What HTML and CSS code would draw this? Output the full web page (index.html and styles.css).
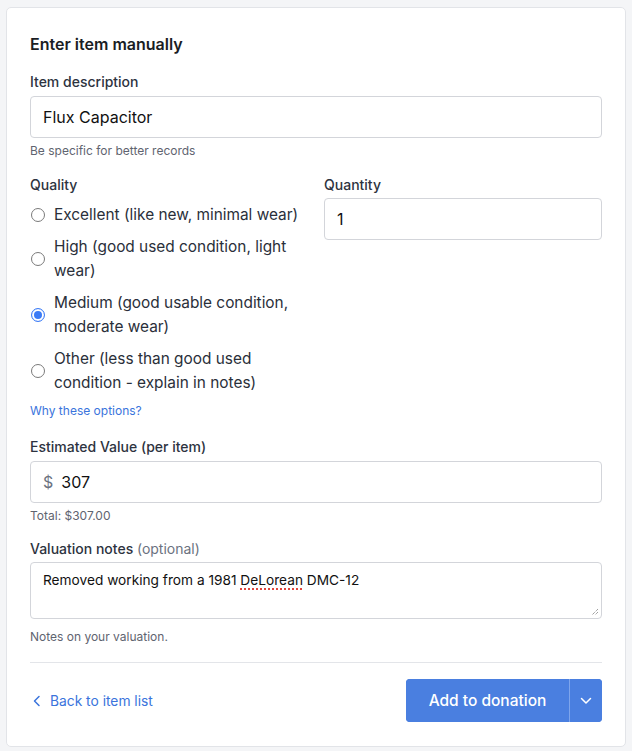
FILE: index.html
```html
<!DOCTYPE html>
<html lang="en">
<head>
<meta charset="utf-8">
<title>Enter item manually</title>
<link rel="stylesheet" href="styles.css">
</head>
<body>
<div class="card">
  <h2 class="title">Enter item manually</h2>

  <div class="field">
    <label class="label" for="desc">Item description</label>
    <input id="desc" class="input" type="text" value="Flux Capacitor">
    <div class="hint">Be specific for better records</div>
  </div>

  <div class="cols">
    <div class="col-left">
      <div class="label">Quality</div>
      <div class="radios">
        <label class="radio"><span class="dot"></span><span class="rtext">Excellent (like new, minimal wear)</span></label>
        <label class="radio"><span class="dot"></span><span class="rtext">High (good used condition, light wear)</span></label>
        <label class="radio"><span class="dot checked"></span><span class="rtext">Medium (good usable condition, moderate wear)</span></label>
        <label class="radio"><span class="dot"></span><span class="rtext">Other (less than good used condition - explain in notes)</span></label>
      </div>
      <a class="small-link" href="#">Why these options?</a>
    </div>
    <div class="col-right">
      <label class="label qty-label" for="qty">Quantity</label>
      <input id="qty" class="input" type="text" value="1">
    </div>
  </div>

  <div class="field">
    <label class="label" for="val">Estimated Value (per item)</label>
    <div class="input money"><span class="cur">$</span><span class="num">307</span></div>
    <div class="hint">Total: $307.00</div>
  </div>

  <div class="field notes-field">
    <label class="label notes-label" for="notes">Valuation notes <span class="opt">(optional)</span></label>
    <div class="textarea"><span>Removed working from a 1981 <span class="spell">DeLorean</span> DMC-12</span>
      <svg class="grip" width="8" height="8" viewBox="0 0 8 8"><path d="M7 1 L1 7 M7 4 L4 7" stroke="#777" stroke-width="1" stroke-dasharray="1 1"/></svg>
    </div>
    <div class="hint notes-hint">Notes on your valuation.</div>
  </div>

  <div class="footer">
    <a class="back" href="#">
      <svg width="10" height="12" viewBox="0 0 10 12"><path d="M7 1.5 L2.5 6 L7 10.5" fill="none" stroke="currentColor" stroke-width="1.5" stroke-linecap="round" stroke-linejoin="round"/></svg>
      <span>Back to item list</span>
    </a>
    <div class="btn-group">
      <button class="btn-main">Add to donation</button>
      <button class="btn-caret" aria-label="More options">
        <svg width="12" height="8" viewBox="0 0 12 8"><path d="M1.5 1.5 L6 6 L10.5 1.5" fill="none" stroke="#fff" stroke-width="1.5" stroke-linecap="round" stroke-linejoin="round"/></svg>
      </button>
    </div>
  </div>
</div>
</body>
</html>
```

FILE: styles.css
```css
* { box-sizing: border-box; }
html, body { margin: 0; }
body {
  background: #f4f5f7;
  font-family: Inter, "Noto Sans", "Liberation Sans", sans-serif;
  color: #1f2937;
  padding: 7px 6px 4px 6px;
}
.card {
  width: 620px;
  height: 740px;
  background: #fff;
  border: 1px solid #e2e4e8;
  border-radius: 5px;
  padding: 23px 23px 0 23px;
}
.title {
  margin: 3px 0 0 0;
  font-size: 16px;
  font-weight: 600;
  line-height: 20px;
  color: #1a1d24;
}
.field { margin-top: 18px; }
.notes-field { margin-top: 15px; }
.label {
  display: block;
  font-size: 14px;
  font-weight: 500;
  color: #2d3340;
  line-height: 20px;
  margin-bottom: 4px;
}
.qty-label { margin-bottom: 3px; }
.notes-label { margin-bottom: 3px; }
.opt { font-weight: 400; color: #6b7280; }
.input {
  display: flex;
  align-items: center;
  width: 100%;
  height: 42px;
  border: 1px solid #d3d5da;
  border-radius: 4px;
  padding: 0 12px;
  font-family: inherit;
  font-size: 16px;
  color: #111;
  background: #fff;
  outline: none;
}
.hint {
  font-size: 12px;
  color: #5f6470;
  line-height: 16px;
  margin-top: 5px;
}
.cols {
  display: grid;
  grid-template-columns: 1fr 278px;
  column-gap: 24px;
  margin-top: 16px;
}
.radios {
  display: flex;
  flex-direction: column;
  gap: 8px;
  margin-top: 8px;
}
.radio {
  display: flex;
  align-items: center;
  gap: 9px;
  font-size: 15.4px;
  line-height: 24px;
  color: #2a2f3a;
}
.dot {
  flex: none;
  width: 14px;
  height: 14px;
  border-radius: 50%;
  border: 1px solid #7a7a7a;
  background: #fff;
  margin-left: 1px;
}
.dot.checked {
  border: 1.5px solid #3b7bf6;
  box-shadow: inset 0 0 0 2px #fff, inset 0 0 0 7px #3b7bf6;
}
.small-link {
  display: block;
  margin-top: 8px;
  font-size: 12px;
  line-height: 16px;
  color: #3a74dc;
  text-decoration: none;
}
.money { gap: 8px; }
.cur { color: #6b7280; font-size: 16px; }
.textarea {
  position: relative;
  height: 57px;
  border: 1px solid #d3d5da;
  border-radius: 4px;
  padding: 8px 12px;
  font-size: 13.7px;
  line-height: 18px;
  color: #111;
}
.spell {
  text-decoration: underline dotted #e0463f;
  text-underline-offset: 3px;
  text-decoration-thickness: 1.5px;
}
.grip { position: absolute; right: 2px; bottom: 2px; }
.notes-hint { margin-top: 10px; }
.footer {
  margin-top: 17px;
  border-top: 1px solid #e3e5e9;
  padding-top: 16px;
  display: flex;
  justify-content: space-between;
  align-items: center;
}
.back {
  display: flex;
  align-items: center;
  gap: 8px;
  padding-left: 2px;
  font-size: 13.8px;
  color: #3a74dc;
  text-decoration: none;
}
.btn-group {
  display: flex;
  height: 43px;
  border-radius: 4px;
  overflow: hidden;
  background: #4a7fe0;
}
.btn-main, .btn-caret {
  border: none;
  background: #4a7fe0;
  color: #fff;
  font-family: inherit;
  font-size: 15.5px;
  font-weight: 500;
  cursor: pointer;
}
.btn-main { width: 163px; }
.btn-caret {
  width: 33px;
  border-left: 1px solid #7ea5ec;
  display: flex;
  align-items: center;
  justify-content: center;
  padding: 0;
}
```
